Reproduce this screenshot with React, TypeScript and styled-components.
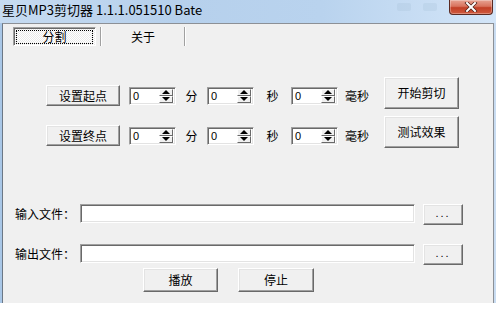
import styled, { createGlobalStyle } from 'styled-components';

const GlobalStyle = createGlobalStyle`
  html, body {
    margin: 0;
    padding: 0;
    background: #fff;
  }
  body {
    font-family: "Noto Sans CJK SC", "Noto Sans", sans-serif;
    font-size: 12px;
    color: #000;
  }
`;

const Window = styled.div`
  width: 496px;
  height: 303px;
  display: flex;
  flex-direction: column;
`;

const TitleBar = styled.div`
  height: 23px;
  display: flex;
  align-items: flex-start;
  background: linear-gradient(90deg, #c6dbf1 0%, #b6d0ec 35%, #b9d3ee 65%, #d3e5f8 100%);
`;

const Title = styled.div`
  flex: 1;
  padding: 2px 0 0 2px;
  font-size: 13px;
  line-height: 16px;
  color: #000;
  white-space: nowrap;
`;

const GhostButton = styled.div`
  width: 14px;
  height: 8px;
  margin: 3px 12px 0 0;
  opacity: 0.12;
  border-radius: 2px;
  background: #7d9ab8;
`;

const CloseButton = styled.div`
  width: 44px;
  height: 15px;
  margin: 0 3px 0 0;
  display: flex;
  align-items: center;
  justify-content: center;
  box-sizing: border-box;
  border: 1px solid #5a2a22;
  border-top: none;
  border-radius: 0 0 4px 4px;
  background: linear-gradient(180deg, #e7a393 0%, #d8735d 45%, #c23f26 55%, #cf5a3e 100%);
  box-shadow: inset 0 0 0 1px rgba(255, 255, 255, 0.3);
`;

const Body = styled.div`
  flex: 1;
  display: flex;
  border-left: 2px solid #a9c7e7;
  border-right: 2px solid #c9dcf1;
`;

const Panel = styled.div`
  flex: 1;
  display: flex;
  flex-direction: column;
  background: #f0f0f0;
  border-top: 1px solid #8c9096;
  border-left: 1px solid #6c7886;
  border-right: 1px solid #8c9096;
`;

const TabStrip = styled.div`
  display: flex;
  height: 19px;
  margin: 3px 0 0 10px;
`;

const Tab = styled.div<{ $active?: boolean; $w: number }>`
  position: relative;
  width: ${(p) => p.$w}px;
  display: flex;
  align-items: center;
  justify-content: center;
  box-sizing: border-box;
  line-height: 14px;
  ${(p) =>
    p.$active
      ? `
    border-top: 1px solid #a0a0a0;
    border-left: 1px solid #a0a0a0;
    border-right: 1px solid #fff;
    border-bottom: 1px solid #fff;
    box-shadow: inset 1px 1px 0 #696969;
    background: repeating-conic-gradient(#ffffff 0 25%, #e9e9e9 0 50%) 0 0 / 2px 2px;
    &::after {
      content: '';
      position: absolute;
      inset: 2px 2px 1px 2px;
      border: 1px dotted #000;
    }
  `
      : ''}
`;

const TabSep = styled.div<{ $ml: number }>`
  width: 0;
  margin-left: ${(p) => p.$ml}px;
  border-left: 1px solid #a0a0a0;
  border-right: 1px solid #fff;
`;

const Params = styled.div`
  display: flex;
  align-items: flex-start;
  margin: 31px 0 0 43px;
`;

const Rows = styled.div`
  width: 338px;
  margin-top: 8px;
  display: flex;
  flex-direction: column;
  gap: 19px;
`;

const Row = styled.div`
  height: 21px;
  display: flex;
  align-items: center;
`;

const Button = styled.button<{ $w: number; $h: number }>`
  width: ${(p) => p.$w}px;
  height: ${(p) => p.$h}px;
  padding: 0;
  box-sizing: border-box;
  font-family: "Noto Sans CJK SC", "Noto Sans", sans-serif;
  font-size: 12px;
  line-height: 14px;
  color: #000;
  background: #f0f0f0;
  border-top: 1px solid #fff;
  border-left: 1px solid #fff;
  border-right: 1px solid #696969;
  border-bottom: 1px solid #696969;
  box-shadow: inset -1px -1px 0 #a0a0a0, inset 1px 1px 0 #e3e3e3;
  flex-shrink: 0;
`;

const Spin = styled.div<{ $ml: number }>`
  width: 47px;
  height: 18px;
  margin-left: ${(p) => p.$ml}px;
  display: flex;
  box-sizing: border-box;
  background: #fff;
  border-top: 1px solid #a0a0a0;
  border-left: 1px solid #a0a0a0;
  border-right: 1px solid #fff;
  border-bottom: 1px solid #fff;
  box-shadow: inset 1px 1px 0 #696969, inset -1px -1px 0 #e3e3e3;
`;

const SpinValue = styled.div`
  flex: 1;
  padding: 1px 0 0 3px;
  font-family: "Liberation Sans", Arial, sans-serif;
  font-size: 11px;
  line-height: 14px;
`;

const SpinArrows = styled.div`
  width: 14px;
  margin: 1px 2px 1px 0;
  display: flex;
  flex-direction: column;
`;

const Arrow = styled.div<{ $down?: boolean }>`
  flex: 1;
  display: flex;
  align-items: center;
  justify-content: center;
  box-sizing: border-box;
  background: #f0f0f0;
  border-top: 1px solid #fff;
  border-left: 1px solid #fff;
  border-right: 1px solid #696969;
  border-bottom: 1px solid #696969;

  &::after {
    content: '';
    width: 0;
    height: 0;
    border-left: 4px solid transparent;
    border-right: 4px solid transparent;
    ${(p) => (p.$down ? 'border-top: 4px solid #000;' : 'border-bottom: 4px solid #000;')}
  }
`;

const Unit = styled.div<{ $w?: number; $ml?: number }>`
  width: ${(p) => (p.$w ? `${p.$w}px` : 'auto')};
  margin-left: ${(p) => p.$ml ?? 0}px;
  text-align: center;
  line-height: 14px;
`;

const Actions = styled.div`
  display: flex;
  flex-direction: column;
  gap: 7px;
`;

const Files = styled.div`
  margin: 56px 0 0 12px;
  display: flex;
  flex-direction: column;
  gap: 19px;
`;

const FileRow = styled.div`
  display: flex;
  align-items: flex-start;
  height: 21px;
`;

const FileLabel = styled.div`
  width: 65px;
  line-height: 19px;
`;

const Field = styled.div`
  width: 335px;
  height: 19px;
  box-sizing: border-box;
  background: #fff;
  border-top: 1px solid #a0a0a0;
  border-left: 1px solid #a0a0a0;
  border-right: 1px solid #fff;
  border-bottom: 1px solid #fff;
  box-shadow: inset 1px 1px 0 #696969, inset -1px -1px 0 #e3e3e3;
`;

const Browse = styled(Button)`
  margin-left: 8px;
  font-family: "Liberation Sans", Arial, sans-serif;
  font-size: 11px;
  letter-spacing: 2px;
  padding-bottom: 3px;
`;

const Playback = styled.div`
  display: flex;
  gap: 20px;
  margin: 3px 0 0 140px;
`;

function SpinBox({ ml }: { ml: number }) {
  return (
    <Spin $ml={ml}>
      <SpinValue>0</SpinValue>
      <SpinArrows>
        <Arrow />
        <Arrow $down />
      </SpinArrows>
    </Spin>
  );
}

function TimeRow({ label }: { label: string }) {
  return (
    <Row>
      <Button $w={74} $h={21}>{label}</Button>
      <SpinBox ml={9} />
      <Unit $w={31}>分</Unit>
      <SpinBox ml={0} />
      <Unit $w={37}>秒</Unit>
      <SpinBox ml={0} />
      <Unit $ml={7}>毫秒</Unit>
    </Row>
  );
}

export default function App() {
  return (
    <>
      <GlobalStyle />
      <Window>
        <TitleBar>
          <Title>星贝MP3剪切器 1.1.1.051510 Bate</Title>
          <GhostButton />
          <GhostButton />
          <CloseButton>
            <svg width="14" height="10" viewBox="0 0 14 10" aria-hidden="true">
              <path d="M3 1 L11 9 M11 1 L3 9" stroke="#4a1f18" strokeWidth="3.4" strokeLinecap="square" />
              <path d="M3 1 L11 9 M11 1 L3 9" stroke="#fff" strokeWidth="2" strokeLinecap="square" />
            </svg>
          </CloseButton>
        </TitleBar>
        <Body>
          <Panel>
            <TabStrip>
              <Tab $active $w={83}>分割</Tab>
              <TabSep $ml={4} />
              <Tab $w={82}>关于</Tab>
              <TabSep $ml={0} />
            </TabStrip>
            <Params>
              <Rows>
                <TimeRow label="设置起点" />
                <TimeRow label="设置终点" />
              </Rows>
              <Actions>
                <Button $w={75} $h={32}>开始剪切</Button>
                <Button $w={75} $h={32}>测试效果</Button>
              </Actions>
            </Params>
            <Files>
              <FileRow>
                <FileLabel>输入文件：</FileLabel>
                <Field />
                <Browse $w={40} $h={21}>...</Browse>
              </FileRow>
              <FileRow>
                <FileLabel>输出文件：</FileLabel>
                <Field />
                <Browse $w={40} $h={21}>...</Browse>
              </FileRow>
            </Files>
            <Playback>
              <Button $w={75} $h={24}>播放</Button>
              <Button $w={76} $h={24}>停止</Button>
            </Playback>
          </Panel>
        </Body>
      </Window>
    </>
  );
}
